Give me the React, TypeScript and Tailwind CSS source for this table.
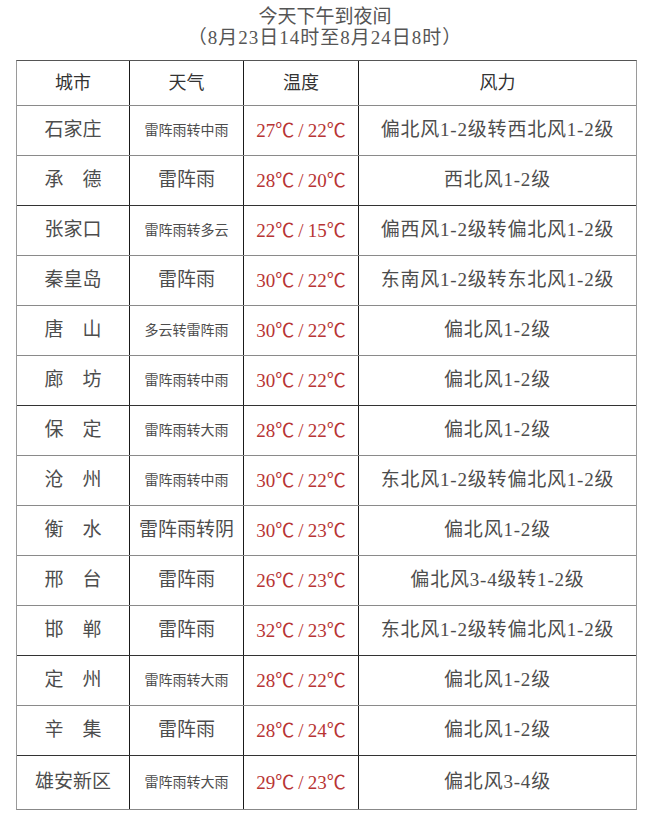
import React from "react"

type Row = {
  city: string
  weather: string
  small?: boolean
  hi: string
  lo: string
  wind: string
  dark?: boolean
}

const rows: Row[] = [
  { city: "石家庄", weather: "雷阵雨转中雨", small: true, hi: "27", lo: "22", wind: "偏北风1-2级转西北风1-2级" },
  { city: "承　德", weather: "雷阵雨", hi: "28", lo: "20", wind: "西北风1-2级", dark: true },
  { city: "张家口", weather: "雷阵雨转多云", small: true, hi: "22", lo: "15", wind: "偏西风1-2级转偏北风1-2级" },
  { city: "秦皇岛", weather: "雷阵雨", hi: "30", lo: "22", wind: "东南风1-2级转东北风1-2级" },
  { city: "唐　山", weather: "多云转雷阵雨", small: true, hi: "30", lo: "22", wind: "偏北风1-2级" },
  { city: "廊　坊", weather: "雷阵雨转中雨", small: true, hi: "30", lo: "22", wind: "偏北风1-2级", dark: true },
  { city: "保　定", weather: "雷阵雨转大雨", small: true, hi: "28", lo: "22", wind: "偏北风1-2级" },
  { city: "沧　州", weather: "雷阵雨转中雨", small: true, hi: "30", lo: "22", wind: "东北风1-2级转偏北风1-2级" },
  { city: "衡　水", weather: "雷阵雨转阴", hi: "30", lo: "23", wind: "偏北风1-2级" },
  { city: "邢　台", weather: "雷阵雨", hi: "26", lo: "23", wind: "偏北风3-4级转1-2级" },
  { city: "邯　郸", weather: "雷阵雨", hi: "32", lo: "23", wind: "东北风1-2级转偏北风1-2级", dark: true },
  { city: "定　州", weather: "雷阵雨转大雨", small: true, hi: "28", lo: "22", wind: "偏北风1-2级" },
  { city: "辛　集", weather: "雷阵雨", hi: "28", lo: "24", wind: "偏北风1-2级", dark: true },
  { city: "雄安新区", weather: "雷阵雨转大雨", small: true, hi: "29", lo: "23", wind: "偏北风3-4级" },
]

const font = { fontFamily: '"Liberation Serif", "Noto Sans CJK SC", serif' }

export default function App() {
  return (
    <div className="w-[650px] h-[840px] bg-white text-[#4d4d4d]" style={font}>
      {/* Title */}
      <div className="pt-[6px] h-[60px] text-center text-[19px] leading-[21px] text-[#555]">
        <div>今天下午到夜间</div>
        <div className="tracking-[1px]">（8月23日14时至8月24日8时）</div>
      </div>

      {/* Table */}
      <div className="ml-[16px] w-[621px] border-t border-t-[#555] border-l border-l-[#9a9a9a] border-r border-r-[#9a9a9a] border-b border-b-[#888]">
        <div className="grid grid-cols-[113px_114px_115px_1fr] h-[45px] border-b border-b-[#8a8a8a] text-[18px] text-[#333]">
          <div className="flex items-center justify-center border-r border-r-[#1a1a1a]">城市</div>
          <div className="flex items-center justify-center border-r border-r-[#1a1a1a]">天气</div>
          <div className="flex items-center justify-center border-r border-r-[#1a1a1a]">温度</div>
          <div className="flex items-center justify-center">风力</div>
        </div>
        {rows.map((r, i) => (
          <div
            key={r.city}
            className={`grid grid-cols-[113px_114px_115px_1fr] ${
              i === rows.length - 1 ? "h-[53px]" : "h-[50px] border-b"
            } ${r.dark ? "border-b-[#333]" : "border-b-[#8a8a8a]"}`}
          >
            <div className="flex items-center justify-center border-r border-r-[#1a1a1a] text-[19px]">
              {r.city}
            </div>
            <div
              className={`flex items-center justify-center border-r border-r-[#1a1a1a] ${
                r.small ? "text-[14px]" : "text-[19px]"
              }`}
            >
              {r.weather}
            </div>
            <div className="flex items-center justify-center border-r border-r-[#1a1a1a] text-[19px] text-[#b83434]">
              <span className="whitespace-nowrap">
                {r.hi}
                <span className="font-['Noto_Sans_CJK_SC']">℃</span>
                <span className="mx-[4px]">/</span>
                {r.lo}
                <span className="font-['Noto_Sans_CJK_SC']">℃</span>
              </span>
            </div>
            <div className="flex items-center justify-center text-[19px] tracking-[0.8px]">{r.wind}</div>
          </div>
        ))}
      </div>
    </div>
  )
}
